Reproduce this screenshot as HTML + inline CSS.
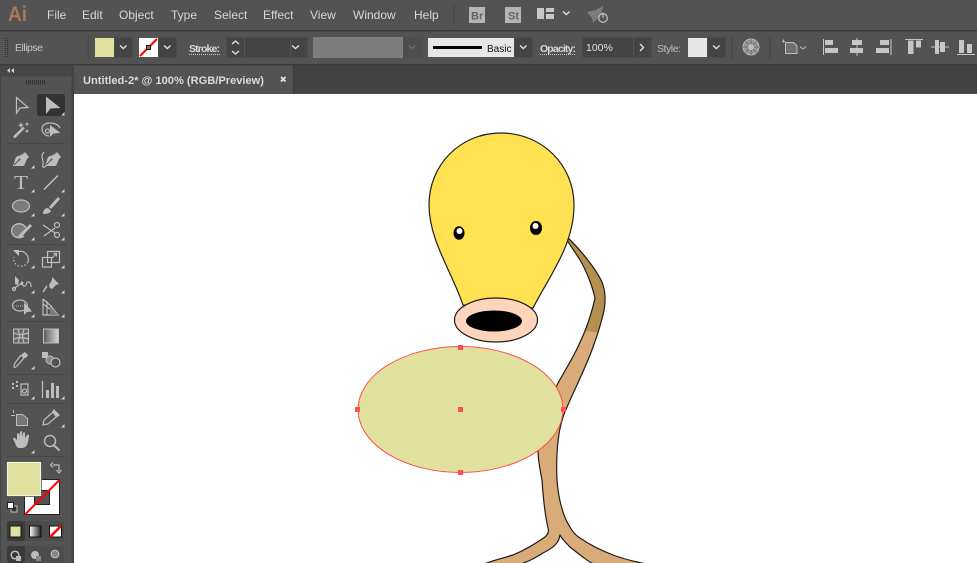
<!DOCTYPE html>
<html><head><meta charset="utf-8"><style>
html,body{margin:0;padding:0;background:#535353;width:977px;height:563px;overflow:hidden}
svg{display:block}
text{font-family:"Liberation Sans",sans-serif}
.m{font-size:12px;fill:#d6d6d6}
.ic{fill:none;stroke:#bdbdbd;stroke-width:1.200}
.f{fill:#bdbdbd;stroke:none}
.ch{fill:none;stroke:#e0e0e0;stroke-width:1.400}
.b{fill:#444;stroke:#4c4c4c}
</style></head><body>
<svg width="977" height="563" viewBox="0 0 977 563" xmlns="http://www.w3.org/2000/svg">
<defs>
<linearGradient id="g" x1="0" x2="1" y1="0" y2="0"><stop offset="0" stop-color="#5a5a5a"/><stop offset="1" stop-color="#d8d8d8"/></linearGradient>
<linearGradient id="g2" x1="0" x2="1" y1="0" y2="0"><stop offset="0" stop-color="#fff"/><stop offset="1" stop-color="#222"/></linearGradient>
<path id="t" d="M3.500 0V3.500H0Z" fill="#d0d0d0"/>
<path id="tail" d="M567 237C580 249 595 268 601 280C606 290 606 303 603 315C600 327 596 339 593 347C586 368 570 398 563 417C557 435 556 460 557 480C558 495 562 515 570 527C574 534 577 536 580 538C590 545 600 550 613 555C623 559 633 561 648 564.500H595C590 563 580 555 570 547C566 543 562 539 560 535C559 540 558 542 555 545C551 549 547 551 543 553C535 558 530 561 518 565H482C490 561 500 559 513 555C525 550 535 544 545 537C548 534 549 532 548 528C545 515 543 495 542 480C540 470 538 460 538 450L557 385C565 370 575 355 581 340C586 330 592 312 595 298C592 285 586 270 580 260C575 252 570 245 567 240Z"/>
<clipPath id="tc"><use href="#tail"/></clipPath>
</defs>
<rect width="977" height="563" fill="#535353"/>
<!-- menu bar -->
<rect y="30" width="977" height="1.500" fill="#3c3c3c"/>
<text x="8" y="21" font-size="21" font-weight="bold" fill="#a9785a" textLength="19" lengthAdjust="spacingAndGlyphs">Ai</text>
<text class="m" x="47" y="19">File</text>
<text class="m" x="82" y="19">Edit</text>
<text class="m" x="119" y="19">Object</text>
<text class="m" x="171" y="19">Type</text>
<text class="m" x="214" y="19">Select</text>
<text class="m" x="263" y="19">Effect</text>
<text class="m" x="310" y="19">View</text>
<text class="m" x="353" y="19">Window</text>
<text class="m" x="414" y="19">Help</text>
<rect x="453" y="5" width="1.500" height="20" fill="#484848"/>
<rect x="469" y="7" width="16" height="16" fill="#b5b5b5"/>
<text x="471" y="19.500" font-size="11" font-weight="bold" fill="#646464">Br</text>
<rect x="505" y="7" width="16" height="16" fill="#b5b5b5"/>
<text x="508" y="19.500" font-size="11" font-weight="bold" fill="#646464">St</text>
<path d="M537 8h7v11h-7zM546 8h8v4h-8zM546 14h8v5h-8z" fill="#c8c8c8"/>
<path class="ch" d="M563 11.500l3.300 3 3.300-3"/>
<path d="M587 12l9-2 7-4-2 9-5 5-3 3-1-5z" fill="#7c7c7c"/>
<circle cx="603" cy="18" r="4.300" fill="#535353" stroke="#bdbdbd" stroke-width="1.300"/>
<path d="M603 12.500v5.500" stroke="#bdbdbd" stroke-width="1.300"/>
<!-- options bar -->
<rect y="64" width="977" height="1.500" fill="#3c3c3c"/>
<path d="M5.500 38v20M7.500 38v20" stroke="#2f2f2f" stroke-dasharray="1 1"/>
<text x="15" y="51" font-size="10.500" fill="#c4c4c4" textLength="28">Ellipse</text>
<rect x="87.500" y="35" width="1.500" height="25" fill="#484848"/>
<rect x="114.500" y="37.500" width="18" height="20" rx="1.500" class="b"/>
<rect x="95" y="38" width="19" height="19" fill="#e0e19e"/>
<path class="ch" d="M120 45.500l3.300 3 3.300-3"/>
<rect x="158.500" y="37.500" width="18" height="20" rx="1.500" class="b"/>
<rect x="139" y="38" width="19" height="19" fill="#fff"/>
<path d="M140 56L157 39" stroke="#f00" stroke-width="2"/>
<rect x="146.500" y="45.500" width="4" height="4" fill="#777" stroke="#111"/>
<path class="ch" d="M164 45.500l3.300 3 3.300-3"/>
<text x="189" y="52" font-size="10.500" font-weight="bold" fill="#d8d8d8" textLength="31">Stroke:</text>
<path d="M189 54.500h31" stroke="#ccc" stroke-dasharray="1 1"/>
<rect x="226.500" y="37.500" width="81" height="20" rx="1.500" class="b"/>
<path d="M244.500 38v19M290.500 38v19" stroke="#555"/>
<path class="ch" d="M232 44l3.500-3 3.500 3M232 51l3.500 3 3.500-3M292 45.500l3.500 3 3.500-3"/>
<rect x="313" y="37" width="90" height="21" fill="#7d7d7d"/>
<rect x="403" y="37" width="19" height="21" fill="#4e4e4e"/>
<path fill="none" stroke="#6a6a6a" stroke-width="1.400" d="M409 45.500l3.300 3 3.300-3"/>
<rect x="514.500" y="37.500" width="18" height="20" rx="1.500" class="b"/>
<rect x="428" y="38" width="86" height="19" fill="#e6e6e6"/>
<rect x="433" y="46" width="49" height="3" fill="#000"/>
<text x="487" y="52" font-size="10" fill="#111">Basic</text>
<path class="ch" d="M520 45.500l3.300 3 3.300-3"/>
<text x="540" y="52" font-size="10.500" font-weight="bold" fill="#d8d8d8" textLength="36">Opacity:</text>
<path d="M540 54.500h36" stroke="#ccc" stroke-dasharray="1 1"/>
<rect x="582.500" y="37.500" width="69" height="20" rx="1.500" class="b"/>
<path d="M633.500 38v19" stroke="#555"/>
<text x="586" y="51" font-size="10.500" fill="#e0e0e0">100%</text>
<path class="ch" d="M640 44l3.500 3.500-3.500 3.500"/>
<text x="657" y="52" font-size="10.500" fill="#bdbdbd" textLength="24">Style:</text>
<rect x="707.500" y="37.500" width="18" height="20" rx="1.500" class="b"/>
<rect x="688" y="38" width="19" height="19" fill="#e6e6e6"/>
<path class="ch" d="M713 45.500l3.300 3 3.300-3"/>
<rect x="731.500" y="35" width="1.500" height="25" fill="#484848"/>
<circle cx="751" cy="47" r="8" fill="#969696" stroke="#b8b8b8" stroke-width="1"/>
<path d="M743 47h16M751 39v16M745.500 41.500l11 11M756.500 41.500l-11 11" stroke="#666" stroke-width=".8"/>
<circle cx="751" cy="47" r="3" fill="#c0c0c0"/>
<rect x="769" y="35" width="1.500" height="25" fill="#484848"/>
<path d="M785.500 42.500h8l3.500 3.500v7.500h-11.500z" fill="#6f6f6f" stroke="#bcbcbc"/>
<path d="M782 41.500h3M783.500 39.500v3" stroke="#bcbcbc"/>
<path fill="none" stroke="#a8a8a8" stroke-width="1.200" d="M800 46.500l3 2.500 3-2.500"/>
<g fill="#c6c6c6">
<path d="M823 39h1v16h-1zM825 40h8v5h-8zM825 48h13v5h-13z"/>
<path d="M856.500 38h1v18h-1zM852 40h10v5h-10zM850 48h13v5h-13z"/>
<path d="M890.500 39h1v16h-1zM880 40h9v5h-9zM876 48h13v5h-13z"/>
<path d="M905 39h18v1h-18zM908 40.500h5.500v13.500h-5.500zM916 40.500h5v7h-5z"/>
<path d="M931 46.500h18v1h-18zM935 40h4v14h-4zM940 42h5v10h-5z"/>
<path d="M957 54h18v1h-18zM959 40h5v13h-5zM967 44h5v9h-5z"/>
</g>
<!-- tab row -->
<rect x="74" y="65.500" width="903" height="28" fill="#434343"/>
<rect x="74" y="65.500" width="219" height="28" fill="#535353"/>
<rect x="293" y="65.500" width="1" height="28" fill="#3a3a3a"/>
<text x="83" y="84" font-size="11" font-weight="bold" fill="#dadada" textLength="181" lengthAdjust="spacingAndGlyphs">Untitled-2* @ 100% (RGB/Preview)</text>
<path d="M281 77l4.500 4.500M285.500 77l-4.500 4.500" stroke="#e6e6e6" stroke-width="1.800"/>
<!-- left panel -->
<rect y="65.500" width="74" height="498" fill="#434343"/>
<rect x="1" y="76.500" width="70.500" height="487" fill="#535353"/>
<rect y="65.500" width="72" height="11" fill="#464646"/>
<path d="M7 70.500l3-2.500v5zM11 70.500l3-2.500v5z" fill="#cfcfcf"/>
<path d="M26.500 80v4.500M28.500 80v4.500M30.500 80v4.500M32.500 80v4.500M34.500 80v4.500M36.500 80v4.500M38.500 80v4.500M40.500 80v4.500M42.500 80v4.500M44.500 80v4.500" stroke="#333" stroke-width="1"/>
<rect x="37" y="94" width="28" height="22" rx="2.500" fill="#333"/>
<g stroke="#474747">
<path d="M6 143.500h60M6 244.500h60M6 321.500h60M6 374.500h60M6 403.500h60M6 456.500h60"/>
</g>
<!-- tools -->
<path class="ic" d="M16.500 97.500V113l3.500-5 8-.5z"/>
<path class="f" d="M46 96.500V114l4.500-5.500 10-.5z"/>
<use href="#t" x="61" y="112"/>
<path d="M14 137.500l10-10" stroke="#bdbdbd" stroke-width="2.600"/>
<path class="f" d="M21 122l1 2.500 2 .5-2 1-1 2-1-2-2-1 2-.5zM27 122l.7 1.500 1.500.5-1.500.7-.7 1.500-.7-1.500-1.500-.7 1.500-.5zM27 129l.7 1.500 1.500.5-1.500.7-.7 1.500-.7-1.500-1.500-.7 1.500-.5z"/>
<path class="ic" d="M49 136c-4 0-7-4-7-7 0-4 4-6 8-6 4 0 8 1 10 5"/>
<circle class="ic" cx="47.500" cy="131" r="2"/>
<path class="f" d="M50 125v12l3.500-3.500 7-.5z"/>
<!-- pen -->
<path class="f" d="M13 166l3-9 7-3 2-2 4 5-2 2-3 7z"/>
<path d="M14 165l5-5" stroke="#535353"/><circle cx="19.500" cy="159.500" r="1" fill="#535353"/>
<use href="#t" x="31" y="165"/>
<path class="f" d="M45 166l3-9 7-3 2-2 4 5-2 2-3 7z"/>
<path d="M46 165l5-5" stroke="#535353"/><circle cx="51.500" cy="159.500" r="1" fill="#535353"/>
<path class="ic" d="M44 152c-3 3-2 6-1 9s-1 5 0 6c1 1 2 0 3-1"/>
<text x="14" y="189" font-size="20" fill="#bdbdbd" style="font-family:'Liberation Serif',serif" textLength="14" lengthAdjust="spacingAndGlyphs">T</text>
<use href="#t" x="31" y="189"/>
<path d="M44 189.500l14-14" stroke="#bdbdbd" stroke-width="1.500"/>
<use href="#t" x="61" y="189"/>
<ellipse cx="21" cy="206" rx="8.500" ry="6" fill="#7b7b7b" stroke="#bdbdbd" stroke-width="1.200"/>
<use href="#t" x="31" y="213"/>
<path class="f" d="M43 214c0-4 2-6 5-6l3 3c-1 2-4 3-8 3z"/>
<path d="M50 208l9-10" stroke="#bdbdbd" stroke-width="3"/>
<use href="#t" x="61" y="213"/>
<path d="M24 236a7.500 7 0 1 1 2-8" fill="#7b7b7b" stroke="#bdbdbd" stroke-width="1.300"/>
<path d="M19 237l12-12" stroke="#bdbdbd" stroke-width="3"/>
<use href="#t" x="31" y="237"/>
<path class="ic" d="M43 225l12 8M44 236l11-8"/>
<circle class="ic" cx="57" cy="225" r="2.500"/>
<circle class="ic" cx="57" cy="235" r="2.500"/>
<use href="#t" x="61" y="237"/>
<!-- rotate -->
<path class="ic" d="M17 252c3-1 6-1 8 1 3 2 4 6 3 9"/>
<path class="ic" stroke-dasharray="1.500 2" d="M28 262c-2 3-5 5-9 4-4-1-6-5-5-9"/>
<path class="f" d="M13 250h6v6z"/>
<use href="#t" x="31" y="265"/>
<rect class="ic" x="42.500" y="257.500" width="9" height="9.500"/>
<rect class="ic" x="47.500" y="251.500" width="12" height="11"/>
<path class="ic" d="M52 258l4-4M53.500 253.500h3v3"/>
<use href="#t" x="61" y="265"/>
<!-- warp -->
<path class="ic" stroke-width="1.500" d="M13 288c4 0 6-4 8-4s2 3 4 2 1-5 4-4c2 1 2 3 2 5"/>
<path class="f" d="M15 276l4 4-1 5-3-1z"/>
<circle class="ic" cx="14" cy="289" r="1.500"/>
<circle class="f" cx="22" cy="283" r="1.500"/>
<use href="#t" x="31" y="290"/>
<path class="f" d="M52 277l7 7-3 1-4 4-2-1-1-3 3-5z"/>
<path d="M47 286l-4 6" stroke="#bdbdbd" stroke-width="1.500"/>
<use href="#t" x="61" y="290"/>
<!-- shape builder -->
<ellipse class="ic" cx="20" cy="305.500" rx="7.500" ry="5.500"/>
<path d="M14 306h10" stroke="#bdbdbd" stroke-dasharray="1 1"/>
<path class="f" d="M24 302v13l3-3 5-.5z"/>
<use href="#t" x="31" y="314"/>
<path class="ic" d="M43 299v16h16M43 299l8 7 7 9M43 304l7 5M47 301v14M51 305v10"/>
<path fill="#7b7b7b" d="M50 306l8 9h-8z"/>
<use href="#t" x="61" y="314"/>
<!-- mesh / gradient -->
<rect x="13.500" y="329" width="15" height="14" fill="#666" stroke="#bdbdbd"/>
<path class="ic" stroke-width="1" d="M14 333c5 2 8 2 14 0M14 339c5-2 9-2 14 0M18 329c2 5 2 9 0 14M24 329c-2 5-2 9 0 14"/>
<rect x="43.500" y="329" width="15" height="14" fill="url(#g)" stroke="#bdbdbd"/>
<path class="f" d="M25 352l3 3-1 2-2 1-2 0-2-2 1-2z"/>
<path class="ic" stroke-width="2" d="M21 355l-6 8c-1 2-1 3-1 4 1 1 2 0 3-1l7-8"/>
<use href="#t" x="31" y="366"/>
<rect x="42" y="352" width="6" height="6" fill="#bdbdbd"/>
<circle cx="50" cy="360" r="4" fill="#888" stroke="#bdbdbd"/>
<circle cx="55.500" cy="362.500" r="4.500" fill="#535353" stroke="#bdbdbd" stroke-width="1.200"/>
<path d="M12 383h2v2h-2zM16 381h2v2h-2zM12 387h2v2h-2zM16 385h2v2h-2z" fill="#bdbdbd"/>
<path class="ic" d="M21 384h7v11h-7z"/>
<circle class="ic" cx="24.500" cy="391" r="2"/>
<use href="#t" x="31" y="396"/>
<path class="ic" d="M42.500 381v17"/>
<path class="f" d="M46 390h3v8h-3zM51 383h3v15h-3zM56 386h3v12h-3z"/>
<use href="#t" x="61" y="396"/>
<path d="M11 415.500h4M13.500 410v3" stroke="#bdbdbd"/>
<path d="M16.500 414.500h6l5 4v7H16.500z" fill="#777" stroke="#bdbdbd"/>
<path d="M54 410l5 5-3 2-8 7-5 1 1-5 8-7z" fill="#535353" stroke="#bdbdbd" stroke-width="1.200"/>
<path class="f" d="M54 410l5 5-3 2-4-5z"/>
<use href="#t" x="61" y="424"/>
<path class="f" d="M15 443l-2-4c0-1 1-2 2-1l2 2v-6c0-1 2-1 2 0v3l1-5c0-1 2-1 2 0v5l1-4c0-1 2-1 2 0v5l2-3c1-1 2 0 2 1l-1 6c-1 4-3 6-6 6h-3c-2 0-3-2-4-5z"/>
<use href="#t" x="31" y="450"/>
<circle cx="50" cy="441" r="5.500" fill="none" stroke="#bdbdbd" stroke-width="1.400"/>
<path d="M54 445.500l5.500 5" stroke="#bdbdbd" stroke-width="2"/>
<!-- swap -->
<path class="ic" d="M53 465h6v6M53 462.500l-2.500 2.500 2.500 2.500M56.500 470l2.500 3 2.500-3"/>
<!-- stroke swatch -->
<rect x="24.500" y="479.500" width="35" height="35" fill="#fff" stroke="#222"/>
<rect x="34.500" y="490.500" width="15" height="14" fill="#535353" stroke="#222"/>
<path d="M25 514.500L59.500 480" stroke="#f00" stroke-width="2"/>
<rect x="7" y="462" width="34" height="34" fill="#e0e19e" stroke="#fff" stroke-width="1.200"/>
<rect x="6.500" y="461.500" width="35" height="35" fill="none" stroke="#222" stroke-width=".6"/>
<rect x="11" y="506" width="6" height="6" fill="#333" stroke="#ddd" stroke-width=".8"/>
<rect x="7.500" y="502.500" width="6" height="6" fill="#fff" stroke="#222"/>
<!-- mode rows -->
<rect x="7" y="521" width="57" height="20" rx="2" fill="#4c4c4c"/>
<rect x="7" y="521" width="18" height="20" rx="2" fill="#3a3a3a"/>
<rect x="10" y="526" width="11" height="11" fill="#e0e19e" stroke="#111"/>
<rect x="29.500" y="526" width="11.500" height="11" fill="url(#g2)" stroke="#111"/>
<rect x="49.500" y="526" width="12" height="11" fill="#fff" stroke="#111"/>
<path d="M50 537l11-11" stroke="#f00" stroke-width="2.500"/>
<rect x="7" y="546" width="57" height="17" rx="2" fill="#4c4c4c"/>
<rect x="7" y="546" width="18" height="17" rx="2" fill="#3a3a3a"/>
<circle cx="15" cy="555" r="3.800" fill="none" stroke="#bdbdbd" stroke-width="1.500"/>
<rect x="16" y="556" width="5" height="5" fill="#bdbdbd"/>
<circle cx="35" cy="555" r="4" fill="#bdbdbd"/><rect x="36" y="556" width="5" height="5" fill="#888"/>
<circle cx="55" cy="554" r="3.800" fill="#888" stroke="#bdbdbd" stroke-width="1.200"/>
<!-- canvas -->
<rect x="74" y="94" width="903" height="469" fill="#fff"/>
<use href="#tail" fill="#d8ab78"/>
<path d="M560 230H612V334L586 331H560Z" fill="#b58f50" clip-path="url(#tc)"/>
<use href="#tail" fill="none" stroke="#1c1c1c" stroke-width="1.200" stroke-linejoin="round"/>
<path d="M463 305C452 272 429 240 429 205C429 165 460 133 501 133C542 133 574 165 574 205C574 245 550 275 533 308Z" fill="#ffe152" stroke="#1f1f1f" stroke-width="1.200"/>
<ellipse cx="496" cy="320" rx="41.500" ry="22" fill="#fed5ba" stroke="#1f1f1f" stroke-width="1.200"/>
<ellipse cx="494" cy="321" rx="28" ry="10.500" fill="#000"/>
<ellipse cx="459" cy="233" rx="5.500" ry="6.800" fill="#000"/><circle cx="459.500" cy="231" r="3" fill="#fff"/>
<ellipse cx="536" cy="228" rx="6" ry="7" fill="#000"/><circle cx="535.500" cy="226" r="3" fill="#fff"/>
<ellipse cx="460.500" cy="409.500" rx="102.500" ry="63" fill="#e0e19e" stroke="#ff4f50" stroke-width="1"/>
<path d="M458 345h5v5h-5zM458 470h5v5h-5zM355 407h5v5h-5zM561 407h5v5h-5zM458 407h5v5h-5z" fill="#ff4f50"/>
</svg>
</body></html>
